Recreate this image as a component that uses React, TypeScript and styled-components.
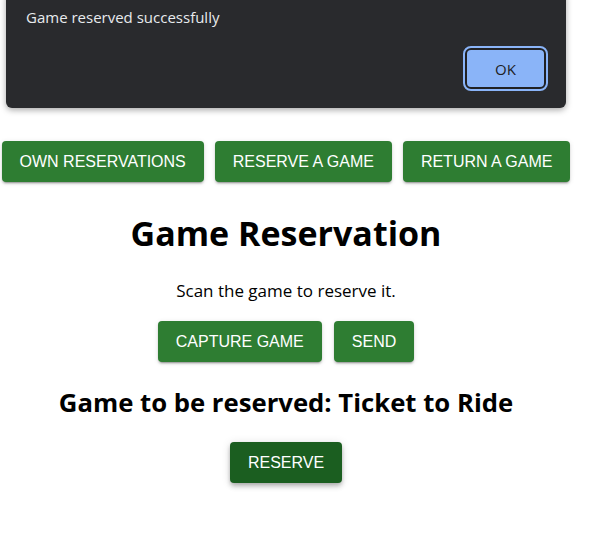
import React from "react";
import styled, { createGlobalStyle } from "styled-components";

const Global = createGlobalStyle`
  html, body { margin: 0; padding: 0; background: #ffffff; }
  body { font-family: "Open Sans", "Noto Sans", sans-serif; overflow: hidden; }
`;

const Page = styled.div`
  width: 572px;
  height: 560px;
  display: flex;
  flex-direction: column;
  align-items: center;
  padding-top: 141px;
  box-sizing: border-box;
`;

const NavRow = styled.nav`
  display: flex;
  justify-content: center;
  gap: 11px;
  width: 100%;
`;

const Button = styled.button<{ $dark?: boolean }>`
  flex: none;
  height: 41px;
  padding: 0 18px;
  border: none;
  border-radius: 4px;
  background: ${(p) => (p.$dark ? "#1b5e20" : "#2e7d32")};
  color: #ffffff;
  font-family: "Liberation Sans", Arial, sans-serif;
  font-size: 16px;
  font-weight: 400;
  letter-spacing: 0;
  text-transform: uppercase;
  white-space: nowrap;
  box-shadow: ${(p) =>
    p.$dark
      ? "0 2px 4px -1px rgba(0,0,0,0.2), 0 4px 5px 0 rgba(0,0,0,0.14), 0 1px 10px 0 rgba(0,0,0,0.12)"
      : "0 3px 1px -2px rgba(0,0,0,0.2), 0 2px 2px 0 rgba(0,0,0,0.14), 0 1px 5px 0 rgba(0,0,0,0.12)"};
`;

const Title = styled.h1`
  margin: 28px 0 0;
  font-size: 34px;
  font-weight: 700;
  line-height: 46px;
  color: #000;
`;

const Hint = styled.p`
  margin: 23px 0 0;
  font-size: 17px;
  line-height: 24px;
  color: #000;
`;

const ActionRow = styled.div`
  display: flex;
  gap: 12px;
  margin-top: 18px;
`;

const Subtitle = styled.h2`
  margin: 23px 0 0;
  font-size: 25.7px;
  font-weight: 700;
  line-height: 36px;
  color: #000;
`;

const ReserveWrap = styled.div`
  margin-top: 21px;
`;

const Dialog = styled.div`
  position: absolute;
  left: 6px;
  top: -10px;
  width: 560px;
  height: 118px;
  box-sizing: border-box;
  background: #292a2d;
  border-radius: 6px;
  box-shadow: 0 2px 6px rgba(0, 0, 0, 0.35);
  padding: 17px 20px 0 20px;
  display: flex;
  flex-direction: column;
`;

const DialogText = styled.div`
  font-size: 15px;
  color: #e8eaed;
  line-height: 20px;
`;

const DialogActions = styled.div`
  display: flex;
  justify-content: flex-end;
  margin-top: 21px;
`;

const OkButton = styled.button`
  width: 81px;
  height: 41px;
  box-sizing: border-box;
  border-radius: 6px;
  border: 2px solid #202124;
  outline: 2px solid #8ab4f8;
  background: #8ab4f8;
  color: #202124;
  font-family: "Open Sans", "Noto Sans", sans-serif;
  font-size: 15px;
`;

export default function App() {
  return (
    <>
      <Global />
      <Page>
        <NavRow>
          <Button>Own reservations</Button>
          <Button>Reserve a game</Button>
          <Button>Return a game</Button>
        </NavRow>
        <Title>Game Reservation</Title>
        <Hint>Scan the game to reserve it.</Hint>
        <ActionRow>
          <Button>Capture game</Button>
          <Button>Send</Button>
        </ActionRow>
        <Subtitle>Game to be reserved: Ticket to Ride</Subtitle>
        <ReserveWrap>
          <Button $dark>Reserve</Button>
        </ReserveWrap>
      </Page>
      <Dialog>
        <DialogText>Game reserved successfully</DialogText>
        <DialogActions>
          <OkButton>OK</OkButton>
        </DialogActions>
      </Dialog>
    </>
  );
}
